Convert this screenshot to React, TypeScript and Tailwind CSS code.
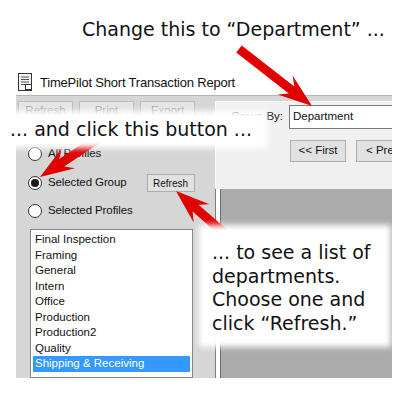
import React from "react";

type ArrowProps = { x1: number; y1: number; x2: number; y2: number };

// red pointer arrow, drawn as a single polygon along the line x1,y1 -> x2,y2
function Arrow({ x1, y1, x2, y2 }: ArrowProps) {
  const dx = x2 - x1;
  const dy = y2 - y1;
  const len = Math.hypot(dx, dy);
  const ux = dx / len;
  const uy = dy / len;
  const px = -uy;
  const py = ux;
  const shaft = 4.5;
  const headLen = 26;
  const headW = 12;
  const sweep = 8;
  const p = (a: number, b: number) => `${x1 + ux * a + px * b},${y1 + uy * a + py * b}`;
  const pts = [
    p(0, shaft),
    p(len - headLen, shaft),
    p(len - headLen - sweep, headW),
    p(len, 0),
    p(len - headLen - sweep, -headW),
    p(len - headLen, -shaft),
    p(0, -shaft),
  ].join(" ");
  return <polygon points={pts} fill="#e10000" />;
}

function Radio({ checked, label }: { checked?: boolean; label: string }) {
  return (
    <div className="flex items-center gap-[6px]">
      <span className="w-[14px] h-[14px] rounded-full border border-[#333] bg-white flex items-center justify-center">
        {checked && <span className="w-[8px] h-[8px] rounded-full bg-[#1a1a1a]" />}
      </span>
      <span className="text-[11.5px] tracking-[-0.1px] text-[#111]">{label}</span>
    </div>
  );
}

const groups = [
  "Final Inspection",
  "Framing",
  "General",
  "Intern",
  "Office",
  "Production",
  "Production2",
  "Quality",
  "Shipping & Receiving",
];

export default function App() {
  return (
    <div className="relative w-[400px] h-[400px] bg-white overflow-hidden font-['Liberation_Sans',sans-serif]">
      {/* caption on top */}
      <div className="h-[66px] pt-[17px] pl-[82px] font-['DejaVu_Sans',sans-serif] text-[19px] text-[#111] leading-[24px] whitespace-nowrap">
        Change this to “Department” ...
      </div>

      {/* title bar */}
      <div className="h-[29px] flex items-center gap-[7px] pl-[18px] pt-[4px]">
        <svg width="15" height="19" viewBox="0 0 15 19">
          <rect x="0.5" y="0.5" width="13" height="17" fill="#f4f4f4" stroke="#333" />
          <line x1="3" y1="4" x2="11" y2="4" stroke="#555" />
          <line x1="3" y1="6.5" x2="11" y2="6.5" stroke="#555" />
          <line x1="3" y1="9" x2="11" y2="9" stroke="#555" />
          <line x1="3" y1="11.5" x2="7" y2="11.5" stroke="#555" />
          <rect x="7.5" y="11.5" width="6" height="5" fill="#fff" stroke="#333" />
        </svg>
        <span className="text-[13px] text-[#111] tracking-[-0.2px]">TimePilot Short Transaction Report</span>
      </div>

      {/* window body */}
      <div className="ml-[16px] w-[376px] h-[283px] flex border-t border-[#b5b5b5] bg-[#d6d6d6] overflow-hidden">
        {/* left panel */}
        <div className="w-[199px] shrink-0 flex flex-col pt-[5px] pl-[2px]">
          <div className="flex gap-[6px]">
            {["Refresh", "Print", "Export"].map((b) => (
              <div
                key={b}
                className="w-[55px] h-[20px] border border-[#bdbdbd] bg-[#e4e4e4] text-[11.5px] text-[#a3a3a3] flex items-center justify-center"
              >
                {b}
              </div>
            ))}
          </div>
          <div className="pl-[10px] mt-[23px] h-[20px] flex items-center">
            <Radio label="All Profiles" />
          </div>
          <div className="pl-[10px] mt-[9px] h-[20px] flex items-center">
            <Radio checked label="Selected Group" />
            <div className="ml-[20px] w-[48px] h-[18px] border border-[#adadad] bg-[#e1e1e1] text-[10px] text-[#111] flex items-center justify-center">
              Refresh
            </div>
          </div>
          <div className="pl-[10px] mt-[8px] h-[20px] flex items-center">
            <Radio label="Selected Profiles" />
          </div>
          <div className="ml-[12px] mt-[8px] w-[163px] flex-1 border border-[#828790] bg-white pt-[2px] px-[2px]">
            {groups.map((g, i) => (
              <div
                key={g}
                className={`h-[15.5px] leading-[15.5px] pl-[2px] text-[11.5px] ${
                  i === groups.length - 1 ? "bg-[#3399ff] text-white" : "text-[#111]"
                }`}
              >
                {g}
              </div>
            ))}
          </div>
        </div>

        {/* right side */}
        <div className="flex-1 min-w-0 flex flex-col pt-[5px] overflow-hidden">
          <div className="h-[88px] bg-[#f0f0f0] border-t border-l border-[#fafafa] pt-[3px]">
            <div className="flex items-center">
              <span className="w-[67px] shrink-0 text-right text-[11.5px] text-[#111]">Group By:</span>
              <div className="ml-[6px] w-[140px] shrink-0 h-[24px] border border-[#7a7a7a] bg-white flex items-center pl-[3px] text-[11.5px] text-[#111]">
                Department
              </div>
            </div>
            <div className="flex gap-[10px] mt-[11px] pl-[74px]">
              <div className="w-[56px] h-[22px] shrink-0 border border-[#adadad] bg-[#e1e1e1] flex items-center justify-center text-[11.5px] text-[#111]">
                &lt;&lt; First
              </div>
              <div className="w-[70px] h-[22px] shrink-0 border border-[#adadad] bg-[#e1e1e1] flex items-center pl-[9px] text-[11.5px] text-[#111] whitespace-nowrap">
                &lt; Previous
              </div>
            </div>
          </div>
          <div className="flex-1 flex">
            <div className="w-[1px] bg-[#7d7d7d]" />
            <div className="w-[4px] bg-white" />
            <div className="w-[1px] bg-[#6b6b6b]" />
            <div className="flex-1 bg-[#ababab]" />
          </div>
        </div>
      </div>

      {/* arrows */}
      <svg className="absolute left-0 top-0" width="400" height="400">
        <Arrow x1={239} y1={49} x2={312} y2={106} />
        <Arrow x1={102} y1={136} x2={40} y2={177} />
        <Arrow x1={232} y1={240} x2={176} y2={191} />
      </svg>

      {/* callout boxes */}
      <div className="absolute left-0 top-[116px] w-[262px] h-[27px] bg-white shadow-[0_0_6px_5px_white] pl-[10px] font-['DejaVu_Sans',sans-serif] text-[19px] leading-[27px] text-[#111] whitespace-nowrap">
        ... and click this button ...
      </div>
      <div className="absolute left-[204px] top-[230px] w-[182px] h-[112px] bg-white shadow-[0_0_6px_5px_white] pl-[8px] pt-[11px] font-['DejaVu_Sans',sans-serif] text-[19px] leading-[23.5px] text-[#111] whitespace-nowrap">
        ... to see a list of
        <br />
        departments.
        <br />
        Choose one and
        <br />
        click “Refresh.”
      </div>
    </div>
  );
}
